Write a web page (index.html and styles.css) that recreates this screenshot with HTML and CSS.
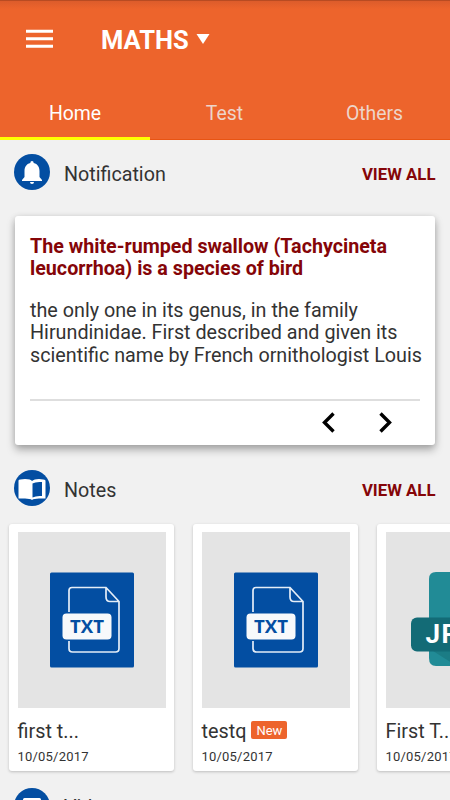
FILE: index.html
```html
<!DOCTYPE html>
<html lang="en">
<head>
<meta charset="utf-8">
<title>Maths</title>
<link rel="stylesheet" href="styles.css">
</head>
<body>
<svg width="0" height="0" class="defs" aria-hidden="true">
  <symbol id="txt-file" viewBox="0 0 84 96">
    <rect y=".5" width="84" height="95" rx="1.5" fill="#034ea2"/>
    <path d="M19 40V18.500Q19 15.500 22 15.500H56L69 29.500V76.500Q69 80 65.500 80H22.500Q19 80 19 76.500V69M56 15.500V25Q56 29.500 60 29.500H69" fill="none" stroke="#e4edf7" stroke-width="1.700"/>
    <rect x="12.500" y="41.500" width="49" height="26" rx="4" fill="#f7f9fb"/>
    <text x="37" y="61" text-anchor="middle" textLength="34" lengthAdjust="spacingAndGlyphs" class="txt-label">TXT</text>
  </symbol>
</svg>
<div class="screen">
  <header class="header">
    <div class="toolbar">
      <svg class="menu" width="27" height="20" viewBox="0 0 27 20"><path d="M0 2.300h27M0 9.800h27M0 17.300h27" stroke="#fff" stroke-width="3"/></svg>
      <h1 class="title">MATHS</h1>
      <svg width="14" height="11" viewBox="0 0 14 11"><path d="M.5 0h13L7 10z" fill="#fff"/></svg>
    </div>
    <nav class="tabs">
      <span class="tab active">Home</span><span class="tab">Test</span><span class="tab">Others</span>
    </nav>
  </header>
  <main>
    <div class="heading first">
      <svg width="36" height="36" viewBox="0 0 36 36"><circle cx="18" cy="18" r="18" fill="#034ea2"/><path d="M18 7q1.700 0 1.700 2c4 1 5.800 4 5.800 8v6l2.500 3v1H8v-1l2.500-3v-6c0-4 1.800-7 5.800-8q0-2 1.700-2zM16 28h4q0 2-2 2t-2-2z" fill="#fff"/></svg>
      <h2>Notification</h2><span class="view">VIEW ALL</span>
    </div>
    <article class="notice">
      <h3>The white-rumped swallow (Tachycineta<br>leucorrhoa) is a species of bird</h3>
      <p>the only one in its genus, in the family<br>Hirundinidae. First described and given its<br>scientific name by French ornithologist Louis</p>
      <div class="pager">
        <svg width="13" height="21" viewBox="0 0 13 21"><path d="M11.500 1.500 2.500 10.500 11.500 19.500" fill="none" stroke="#000" stroke-width="3.400"/></svg>
        <svg width="13" height="21" viewBox="0 0 13 21"><path d="M1.500 1.500 10.500 10.500 1.500 19.500" fill="none" stroke="#000" stroke-width="3.400"/></svg>
      </div>
    </article>
    <div class="heading notes">
      <svg width="36" height="36" viewBox="0 0 36 36"><circle cx="18" cy="18" r="18" fill="#034ea2"/><path d="M4.500 10.500Q5 9 11 9t7 2q2-2 7-2t6.500 1.500V28.500H25q-5 0-7 1.500-2-1.500-7-1.500H4.500z" fill="#fff"/><path d="M18.500 13.500q3-2 9.500-1.500v14q-6-.5-9.500 1.500z" fill="#034ea2"/></svg>
      <h2>Notes</h2><span class="view">VIEW ALL</span>
    </div>
    <div class="cards">
      <article class="card">
        <div class="thumb"><svg width="84" height="96"><use href="#txt-file"/></svg></div>
        <div class="name">first t...</div><div class="date">10/05/2017</div>
      </article>
      <article class="card">
        <div class="thumb"><svg width="84" height="96"><use href="#txt-file"/></svg></div>
        <div class="name">testq<span class="new">New</span></div><div class="date">10/05/2017</div>
      </article>
      <article class="card">
        <div class="thumb"><svg width="98" height="96" viewBox="0 0 98 96"><path d="M25 0H64L90 26V86q0 8-8 8H25q-7 0-7-8V7q0-7 7-7z" fill="#218b96"/><path d="M22 79H72L90 91 82 94H46z" fill="#1b7c85"/><rect y="45.500" width="72" height="34" rx="6" fill="#136b76"/><text x="14.500" y="71" class="jpg-label">JPG</text></svg></div>
        <div class="name">First T...</div><div class="date">10/05/2017</div>
      </article>
    </div>
    <div class="heading videos">
      <svg width="36" height="36" viewBox="0 0 36 36"><circle cx="18" cy="18" r="18" fill="#034ea2"/><rect x="9" y="10" width="18" height="16" rx="1.500" fill="#fff"/></svg>
      <h2>Video</h2><span class="view">VIEW ALL</span>
    </div>
  </main>
</div>
</body>
</html>
```

FILE: styles.css
```css
* { box-sizing: border-box; }
body { margin: 0; font-family: Roboto, sans-serif; background: #f1f1f1; color: #333; }
h1, h2, h3, p { margin: 0; }
.defs { display: block; }
.screen { width: 450px; height: 800px; overflow: hidden; }
.header { height: 140px; background: linear-gradient(#b84b22 0 1px, #dc5c2b 1px, #ed642c 9px); border-bottom: 1px solid #e85413; }
.toolbar { height: 78px; display: flex; align-items: center; padding-left: 26px; color: #fff; }
.title { font-size: 25.5px; line-height: 30px; font-weight: 700; margin: 2px 7px 0 48px; }
.tabs { display: grid; grid-template-columns: repeat(3, 1fr); height: 62px; }
.tab { text-align: center; font-size: 19.4px; line-height: 24px; padding: 24px 1px 0 0; color: #edd5ca; }
.tab.active { color: #fff; padding-right: 0; border-bottom: 3px solid #ff0; }
.heading { display: flex; align-items: center; height: 36px; padding: 0 14px; }
.heading svg { flex: none; }
.heading h2 { margin-left: 14px; font-size: 19.7px; line-height: 24px; font-weight: 400; padding-top: 5px; }
.heading.first { margin-top: 14px; }
.view { margin-left: auto; font-size: 16.8px; line-height: 20px; font-weight: 700; color: #850508; padding: 3px 0.5px 0 0; }
.notice { margin: 26px 15px 0; height: 229px; padding: 20px 15px 0; background: #fff; border-radius: 3px; box-shadow: 0 5px 9px rgba(0,0,0,.28), 0 1px 6px rgba(0,0,0,.12); white-space: nowrap; }
.notice h3 { font-size: 19.7px; line-height: 22px; font-weight: 700; color: #850508; }
.notice p { margin-top: 20px; height: 101px; font-size: 19.75px; line-height: 22.300px; border-bottom: 2px solid #dedede; }
.pager { display: flex; justify-content: flex-end; gap: 44px; padding: 11px 28px 0 0; }
.heading.notes { margin-top: 25px; }
.cards { display: flex; gap: 19px; margin: 18px 0 17px 9px; }
.card { flex: none; width: 165px; height: 247px; padding: 8px 8.5px; border-radius: 3px; background: #fff; box-shadow: 0 1px 3px rgba(0,0,0,.22); }
.thumb { width: 148px; height: 176px; display: flex; align-items: center; justify-content: center; background: #e4e4e4; }
.name { display: flex; align-items: center; height: 24px; margin-top: 12px; font-size: 19.8px; line-height: 24px; }
.new { margin: -4px 0 0 5px; width: 36px; height: 18px; border-radius: 2px; background: #ed642c; color: #fff; font-size: 13px; line-height: 20px; text-align: center; }
.date { margin-top: 5px; font-size: 13px; line-height: 16px; letter-spacing: .2px; }
.heading.videos h2 { padding-top: 3px; }
.txt-label { font: 700 18px "Open Sans", sans-serif; fill: #034ea2; }
.jpg-label { font: 700 26px Roboto, sans-serif; letter-spacing: 1.5px; fill: #fff; }
```
